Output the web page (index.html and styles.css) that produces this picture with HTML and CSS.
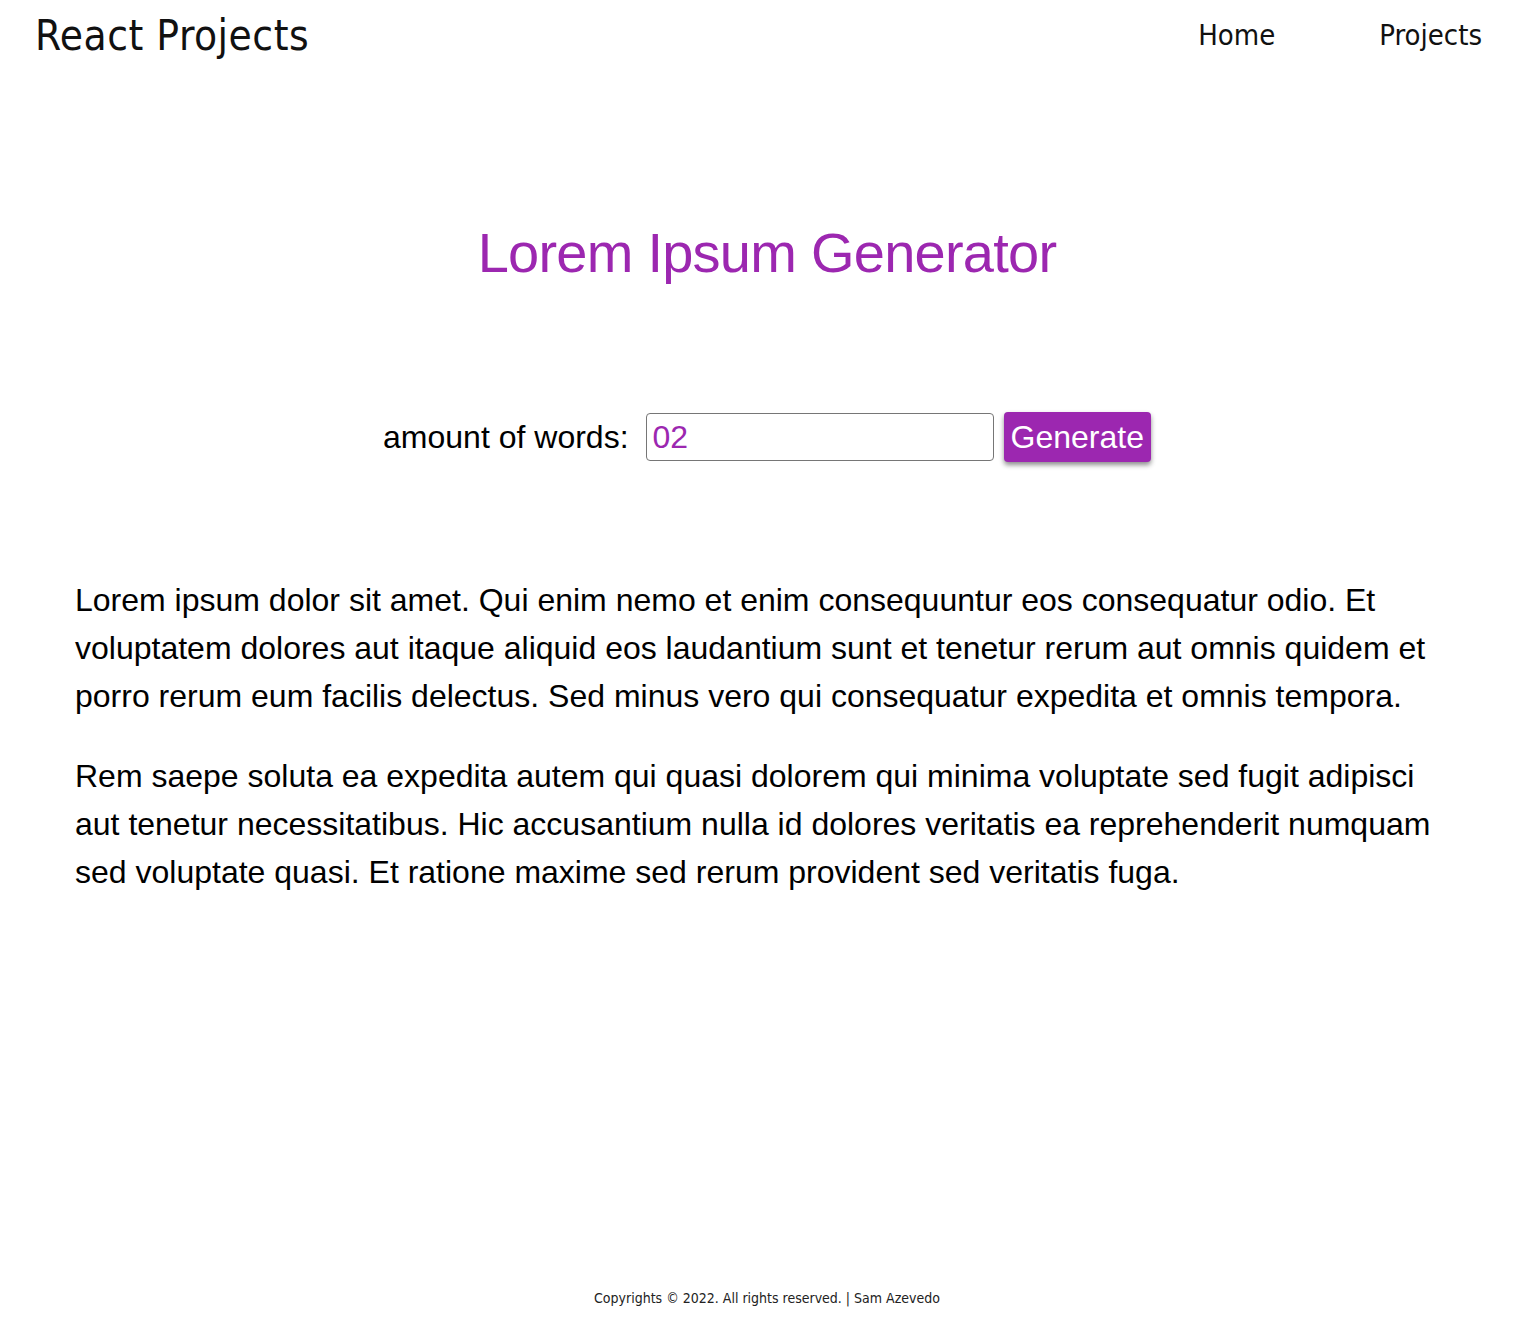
FILE: index.html
```html
<!DOCTYPE html>
<html lang="en">
<head>
<meta charset="utf-8">
<title>React Projects</title>
<link rel="stylesheet" href="styles.css">
</head>
<body>
<div class="page">
  <header class="topbar">
    <div class="brand">React Projects</div>
    <nav class="nav">
      <a href="#" class="nav-link">Home</a>
      <a href="#" class="nav-link">Projects</a>
    </nav>
  </header>
  <main class="main">
    <h1 class="title">Lorem Ipsum Generator</h1>
    <form class="form">
      <label class="label" for="amount">amount of words:</label>
      <input class="input" id="amount" type="text" value="02">
      <button class="btn" type="button">Generate</button>
    </form>
    <section class="text">
      <p>Lorem ipsum dolor sit amet. Qui enim nemo et enim consequuntur eos consequatur odio. Et voluptatem dolores aut itaque aliquid eos laudantium sunt et tenetur rerum aut omnis quidem et porro rerum eum facilis delectus. Sed minus vero qui consequatur expedita et omnis tempora.</p>
      <p>Rem saepe soluta ea expedita autem qui quasi dolorem qui minima voluptate sed fugit adipisci aut tenetur necessitatibus. Hic accusantium nulla id dolores veritatis ea reprehenderit numquam sed voluptate quasi. Et ratione maxime sed rerum provident sed veritatis fuga.</p>
    </section>
  </main>
  <footer class="footer">Copyrights © 2022. All rights reserved. | Sam Azevedo</footer>
</div>
</body>
</html>
```
FILE: styles.css
```css
* { box-sizing: border-box; }
html, body { margin: 0; padding: 0; background: #fff; }
body { font-family: "Liberation Sans", Arial, sans-serif; color: #000; }
.page { min-height: 1326px; display: flex; flex-direction: column; }
.topbar {
  height: 70px;
  display: flex;
  align-items: center;
  justify-content: space-between;
  padding: 0 52px 0 35px;
}
.brand {
  font-family: "DejaVu Sans Condensed", sans-serif;
  font-size: 42px;
  color: #111;
  letter-spacing: 0.5px;
}
.nav { display: flex; gap: 104px; }
.nav-link {
  font-family: "DejaVu Sans Condensed", sans-serif;
  font-size: 29px;
  color: #111;
  text-decoration: none;
}
.main { flex: 1; display: flex; flex-direction: column; align-items: center; }
.title {
  margin: 150px 0 0;
  font-size: 56px;
  letter-spacing: -0.75px;
  font-weight: 400;
  color: #9c27b0;
  line-height: 66px;
}
.form {
  margin-top: 126px;
  display: flex;
  align-items: center;
}
.label { font-size: 32px; margin-right: 17px; }
.input {
  width: 348px;
  height: 48px;
  border: 1px solid #767676;
  border-radius: 4px;
  font-family: "Liberation Sans", Arial, sans-serif;
  font-size: 32px;
  color: #9c27b0;
  padding: 0 6px;
  margin-right: 10px;
}
.btn {
  height: 50px;
  background: #9c27b0;
  color: #fff;
  border: none;
  border-radius: 4px;
  font-family: "Liberation Sans", Arial, sans-serif;
  font-size: 32px;
  padding: 0 7px;
  box-shadow: 0 3px 5px rgba(0,0,0,0.45);
}
.text { margin-top: 114px; align-self: stretch; padding: 0 75px; }
.text p { font-size: 32px; line-height: 48px; margin: 0 0 32px; }
.footer {
  text-align: center;
  font-family: "DejaVu Sans Condensed", sans-serif;
  font-size: 14px;
  color: #222;
  padding-bottom: 20px;
}
```
